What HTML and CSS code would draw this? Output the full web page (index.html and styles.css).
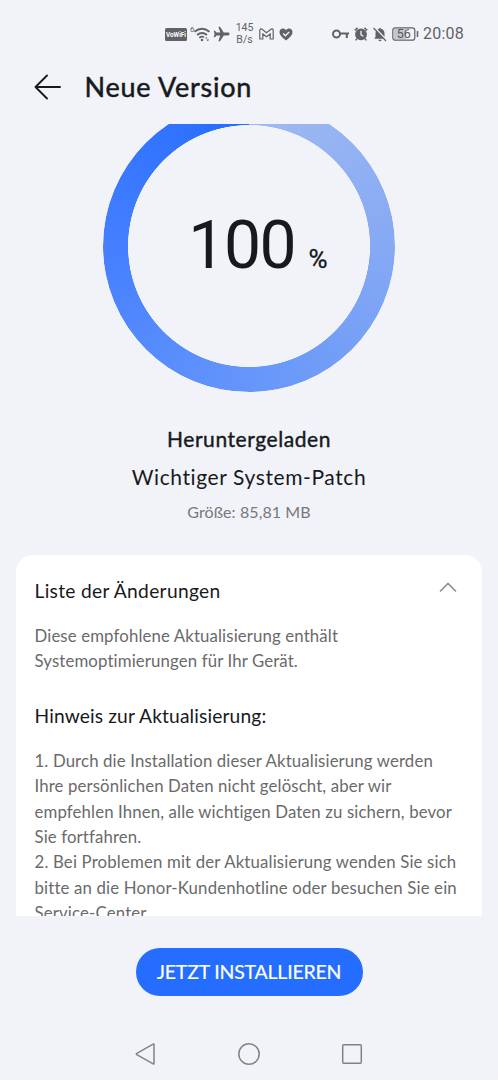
FILE: index.html
```html
<!DOCTYPE html>
<html lang="de">
<head>
<meta charset="utf-8">
<title>Neue Version</title>
<link rel="stylesheet" href="styles.css">
</head>
<body>
<div class="phone">
  <div class="status">
    <div class="status-left">
      <svg class="vowifi" width="22" height="13" viewBox="0 0 22 13"><rect width="22" height="13" rx="1.5" fill="#606265"/><text x="11" y="9.300" text-anchor="middle" textLength="20" lengthAdjust="spacingAndGlyphs">VoWiFi</text></svg>
      <svg class="wifi" width="20" height="18" viewBox="0 0 20 18"><text x="0" y="7" class="six">6</text><g fill="none" stroke="#606265" stroke-width="1.8"><path d="M4.5 6.8Q12 .8 19.5 6.8"/><path d="M7 10Q12 6 17 10"/><path d="M9.3 12.8Q12 10.8 14 12.4"/></g><circle cx="12" cy="15" r="1.3" fill="#606265"/><path d="M15 13.5l1.3-1.5 1.3 1.5zM16.4 14.5h2.8l-1.4 1.7z" fill="#606265"/></svg>
      <svg class="plane" width="17" height="16" viewBox="0 0 17 16"><path fill="#606265" d="M16.5 8c0-.9-.7-1.4-1.5-1.4h-4.2L7 .8H5.4l1.9 5.8H3.5L2 4.7H.7L1.6 8 .7 11.3H2l1.5-1.900h3.800l-1.900 5.800H7l3.800-5.800H15c.8 0 1.500-.5 1.500-1.400z"/></svg>
      <span class="speed"><span>145</span><span>B/s</span></span>
      <svg class="mail" width="15" height="12" viewBox="0 0 15 12"><path fill="none" stroke="#606265" stroke-width="1.200" d="M.8 11V2.100Q1.600.2 3.100 1.200L7.500 4.800l4.400-3.600q1.500-1 2.300.9V11h-3V6L7.500 8.800 3.800 6v5z"/></svg>
      <svg class="heart" width="14" height="13" viewBox="0 0 14 13"><path fill="#606265" d="M7 12.4C3 9.4.5 7.2.5 4.2.5 2 2 .6 3.9.6 5.2.6 6.3 1.2 7 2.2 7.7 1.2 8.8.6 10.1.6 12 .6 13.5 2 13.5 4.2 13.5 7.2 11 9.4 7 12.4z"/><path d="M4.200 5.500l2.200 2.200 3.700-3.600" stroke="#f1f3f8" stroke-width="1.400" fill="none"/></svg>
    </div>
    <div class="status-right">
      <svg class="key" width="18" height="10" viewBox="0 0 18 10"><g fill="none" stroke="#606265" stroke-width="2"><circle cx="4.500" cy="5" r="3.500"/><path d="M8 4.500h9M14.800 4.500v4.500"/></g></svg>
      <svg class="alarm" width="14" height="14" viewBox="0 0 14 14"><circle cx="7" cy="7.300" r="5.900" fill="#606265"/><path d="M.8 3.400L3.600.9M13.200 3.400L10.400.9M3 11.600l-1.400 1.800M11 11.600l1.400 1.800" stroke="#606265" stroke-width="1.500"/><path d="M7 3.800v4l2.400 1.400" stroke="#f1f3f8" stroke-width="1.300" fill="none"/></svg>
      <svg class="bell" width="14" height="15" viewBox="0 0 14 15"><path fill="#606265" d="M7 .6l1 1.200C10.500 2.300 11.500 4.300 11.500 6.500V10l1.300 1.800H1.200L2.500 10V6.500C2.500 4.300 3.500 2.300 6 1.800zM5.300 12.700h3.400Q8.300 14.300 7 14.300T5.300 12.700z"/><path d="M1.500.4L14 13.400" stroke="#f1f3f8" stroke-width="1.500"/><path d="M.5 1L13 14" stroke="#606265" stroke-width="1.200"/></svg>
      <svg class="battery" width="27" height="14" viewBox="0 0 27 14"><rect x="2" y="2" width="12" height="10" fill="#c5c6ca"/><rect x=".8" y=".8" width="22" height="12.400" rx="2.500" fill="none" stroke="#606265" stroke-width="1.200"/><path d="M25.500 4v6" stroke="#606265" stroke-width="1.500"/><text x="11.800" y="11.400" text-anchor="middle" class="level">56</text></svg>
      <span class="clock">20:08</span>
    </div>
  </div>
  <header class="header">
    <svg width="28" height="26" viewBox="0 0 28 26"><path fill="none" stroke="#17191c" stroke-width="1.900" stroke-linecap="round" stroke-linejoin="round" d="M13 1.500L1.500 13 13 24.500M1.500 13H26"/></svg>
    <h1 class="title">Neue Version</h1>
  </header>
  <main class="content">
    <section class="progress">
      <div class="ring"></div>
      <div class="value"><span class="number">100</span><span class="percent">%</span></div>
    </section>
    <p class="state">Heruntergeladen</p>
    <p class="package">Wichtiger System-Patch</p>
    <p class="size">Größe: 85,81 MB</p>
    <section class="card">
      <div class="card-head">
        <h2 class="changes">Liste der Änderungen</h2>
        <svg class="chevron" width="18" height="11" viewBox="0 0 18 11"><path fill="none" stroke="#919191" stroke-width="1.700" stroke-linecap="round" d="M1.500 9L9 1.500 16.500 9"/></svg>
      </div>
      <p class="text">Diese empfohlene Aktualisierung enthält<br>Systemoptimierungen für Ihr Gerät.</p>
      <h2 class="note">Hinweis zur Aktualisierung:</h2>
      <p class="text">1. Durch die Installation dieser Aktualisierung werden<br>Ihre persönlichen Daten nicht gelöscht, aber wir<br>empfehlen Ihnen, alle wichtigen Daten zu sichern, bevor<br>Sie fortfahren.</p>
      <p class="text continued">2. Bei Problemen mit der Aktualisierung wenden Sie sich<br>bitte an die Honor-Kundenhotline oder besuchen Sie ein<br>Service-Center.</p>
    </section>
  </main>
  <footer class="footer">
    <button class="install">JETZT INSTALLIEREN</button>
  </footer>
  <nav class="nav">
    <svg width="22" height="24" viewBox="0 0 22 24"><path d="M19 2.500v19q0 .8-.8.400L1.800 12.700q-.9-.7 0-1.300L18.200 2.100q.8-.4.8.4z"/></svg>
    <svg width="24" height="24" viewBox="0 0 24 24"><circle cx="12" cy="12" r="10.200"/></svg>
    <svg width="22" height="22" viewBox="0 0 22 22"><rect x="1.700" y="1.700" width="18.600" height="18.600" rx="1"/></svg>
  </nav>
</div>
</body>
</html>
```
FILE: styles.css
```css
* { box-sizing: border-box; margin: 0; padding: 0; }
body { background: #f1f3f8; font-family: Lato, "Noto Sans", sans-serif; color: #17191c; }
.phone { width: 498px; height: 1080px; overflow: hidden; display: flex; flex-direction: column; }
.status { height: 56px; padding: 12px 34px 0 165px; display: flex; justify-content: space-between; align-items: center; color: #606265; }
.status-left, .status-right { display: flex; align-items: center; height: 44px; }
.vowifi text { font: 700 8px Roboto, sans-serif; fill: #fff; }
.wifi { margin-left: 3px; }
.six { font: 8px Roboto, sans-serif; fill: #606265; }
.plane { margin-left: 3px; }
.speed { margin-left: 5px; width: 19px; display: flex; flex-direction: column; font: 10.5px/12px Roboto, sans-serif; text-align: center; }
.mail, .heart { margin-left: 5px; }
.alarm { margin-left: 4px; }
.bell, .battery { margin-left: 5px; }
.level { font: 12.5px Roboto, sans-serif; fill: #55575a; }
.clock { margin-left: 4px; font: 16px/20px Roboto, sans-serif; letter-spacing: 0.23px; }
.header { height: 68px; padding: 0 34px 6px; display: flex; align-items: center; gap: 22.5px; }
.title { font-size: 27px; line-height: 36px; font-weight: 400; letter-spacing: 0.75px; -webkit-text-stroke: 0.5px #17191c; }
.content { height: 792px; overflow: hidden; }
.progress { height: 292px; margin-top: -24px; display: grid; place-items: center; }
.ring { grid-area: 1 / 1; width: 292px; height: 292px; border-radius: 50%; background: conic-gradient(#a1bbf1, #86a9f4 25%, #6596fa 50%, #457fff 75%, #236cff); -webkit-mask: radial-gradient(circle, transparent 120.7px, #000 121.3px); mask: radial-gradient(circle, transparent 120.7px, #000 121.3px); }
.value { grid-area: 1 / 1; display: flex; align-items: baseline; font-family: Roboto, sans-serif; padding-left: 18px; }
.number { font-size: 66px; line-height: 80px; letter-spacing: -1.5px; }
.percent { font-size: 26px; margin-left: 13.5px; -webkit-text-stroke: 0.3px #17191c; }
.state, .package { text-align: center; font-size: 21px; line-height: 28px; }
.state { margin-top: 33px; font-weight: 400; letter-spacing: 0.57px; -webkit-text-stroke: 0.4px #17191c; }
.package { margin-top: 10px; letter-spacing: 0.6px; }
.size { margin-top: 10px; text-align: center; font-size: 16px; line-height: 22px; letter-spacing: 0.1px; color: #76787c; }
.card { margin: 32px 16px 0; padding: 24px 18.5px; border-radius: 17px; background: #fff; }
.card-head { display: flex; justify-content: space-between; align-items: flex-start; padding-right: 7px; }
.chevron { margin-top: 3px; }
h2 { font-size: 19.2px; line-height: 24px; font-weight: 400; color: #17191c; }
.changes { letter-spacing: 0.3px; }
.text { margin-top: 20px; font-size: 16.8px; line-height: 25.4px; letter-spacing: 0.13px; color: #6a6a6a; white-space: nowrap; }
.continued { margin-top: 0; letter-spacing: 0.165px; }
.note { margin-top: 30px; letter-spacing: 0.14px; }
.footer { height: 112px; display: flex; justify-content: center; align-items: flex-start; padding-top: 32px; }
.install { width: 227px; height: 48px; border: 0; border-radius: 24px; background: #246dff; color: #fff; font: 400 19.5px/48px Lato, sans-serif; letter-spacing: -0.2px; -webkit-text-stroke: 0.2px #fff; white-space: nowrap; }
.nav { height: 52px; padding: 0 135px; display: flex; justify-content: space-between; align-items: center; }
.nav svg { fill: none; stroke: #818386; stroke-width: 1.5; }
```
